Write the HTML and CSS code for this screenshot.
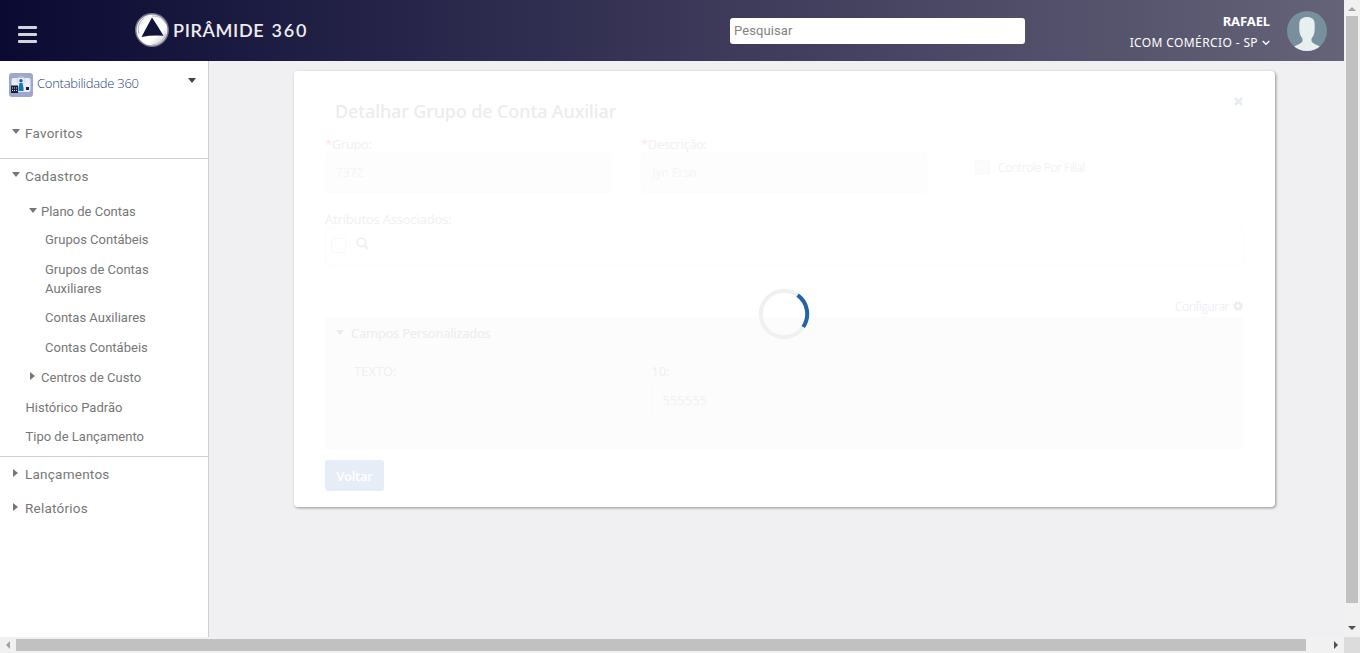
FILE: index.html
```html
<!DOCTYPE html>
<html lang="pt-BR">
<head>
<meta charset="utf-8">
<title>Pirâmide 360</title>
<link rel="stylesheet" href="styles.css">
</head>
<body>
<div class="window">
  <div class="app">
    <header class="topbar">
      <div class="burger"><i></i><i></i><i></i></div>
      <div class="brand">
        <svg width="36" height="36" viewBox="0 0 36 36">
          <defs><linearGradient id="ring" x1="0" y1="0" x2="1" y2="1"><stop offset="0" stop-color="#d6d6dc"/><stop offset=".3" stop-color="#fff"/><stop offset=".65" stop-color="#fff"/><stop offset="1" stop-color="#bcbcc6"/></linearGradient></defs>
          <circle cx="17" cy="18" r="17" fill="#77778b"/>
          <circle cx="17" cy="18" r="15.500" fill="url(#ring)"/>
          <path d="M17 4Q26 3 31 12M31 22Q27 32 17 33M4 22Q1 12 9 6" fill="none" stroke="#b5b5c2" stroke-width="1"/>
          <path d="M17 5.500Q22.800 14 28.500 23.800Q17 23 6.500 25Q12 14.500 17 5.500Z" fill="#141438"/>
        </svg>
        <span class="brand-name">PIRÂMIDE <span class="brand-num">360</span></span>
      </div>
      <input class="search" type="text" placeholder="Pesquisar">
      <div class="user">
        <div class="user-name">RAFAEL</div>
        <div class="company"><span class="company-name">ICOM COMÉRCIO - SP</span><svg width="8" height="6" viewBox="0 0 8 6"><path d="M.7 1 4 4.300 7.300 1" fill="none" stroke="#fff" stroke-width="1.300"/></svg></div>
      </div>
      <svg class="avatar" width="40" height="40" viewBox="0 0 40 40">
        <defs><clipPath id="face"><circle cx="20" cy="20" r="20"/></clipPath></defs>
        <circle cx="20" cy="20" r="20" fill="#78909c"/>
        <path clip-path="url(#face)" d="M20 6C15.500 6 12.300 8 12.300 13V18.500C12.300 23 14 25.500 15.500 27.500V30C15 32 11.500 33.500 7 35.500V40H33V35.500C28.500 33.500 25 32 24.500 30V27.500C26 25.500 27.700 23 27.700 18.500V13C27.700 8 24.500 6 20 6Z" fill="#e8efef"/>
      </svg>
    </header>
    <div class="body">
      <nav class="sidebar">
        <div class="module">
          <svg width="24" height="24" viewBox="0 0 24 24">
            <rect width="24" height="24" rx="3" fill="#9fa8cc"/>
            <rect x="2.500" y="5" width="19" height="14" rx="2" fill="#e9edf5"/>
            <circle cx="12" cy="7.500" r="3.800" fill="none" stroke="#cfd6e6"/>
            <circle cx="12" cy="7.800" r="1.700" fill="#12639f"/>
            <path d="M10.500 10h3l1 5v3h-5v-3z" fill="#1778b8"/>
            <rect x="2" y="12.500" width="7" height="7.500" fill="#14213c"/>
            <path d="M3 15h5M3 17.500h5" stroke="#e9edf5" stroke-dasharray="1 1"/>
            <rect x="17" y="14" width="3" height="3" fill="#14213c"/>
          </svg>
          <span class="module-name">Contabilidade 360</span><i class="down dark"></i>
        </div>
        <div class="group favorites"><i class="down"></i>Favoritos</div>
        <div class="section">
          <div class="group"><i class="down"></i>Cadastros</div>
          <div class="branch"><i class="down"></i>Plano de Contas</div>
          <ul class="leaves">
            <li>Grupos Contábeis</li>
            <li class="tight">Grupos de Contas Auxiliares</li>
            <li>Contas Auxiliares</li>
            <li class="tight">Contas Contábeis</li>
          </ul>
          <div class="branch closed"><i class="right"></i>Centros de Custo</div>
          <div class="entry">Histórico Padrão</div>
          <div class="entry short">Tipo de Lançamento</div>
        </div>
        <div class="group"><i class="right"></i>Lançamentos</div>
        <div class="group"><i class="right"></i>Relatórios</div>
      </nav>
      <main class="main">
        <section class="card">
          <div class="card-head">
            <h1>Detalhar Grupo de Conta Auxiliar</h1>
            <svg width="9" height="9" viewBox="0 0 9 9"><path d="M1 1l7 7M8 1l-7 7" stroke="#e6ebf4" stroke-width="2.600"/></svg>
          </div>
          <div class="fields">
            <div class="field"><label><b>*</b><span>Grupo:</span></label><div class="value">7372</div></div>
            <div class="field"><label><b>*</b><span>Descrição:</span></label><div class="value">Jyn Erso</div></div>
            <div class="check"><i class="box filled"></i><span>Controle Por Filial</span></div>
          </div>
          <div class="attributes">
            <label><span>Atributos Associados:</span></label>
            <div class="attr-box"><i class="box"></i><svg width="13" height="13" viewBox="0 0 13 13"><circle cx="5.300" cy="5.300" r="4.200" fill="none" stroke="#efefef" stroke-width="1.900"/><path d="M8.400 8.400 12 12" stroke="#efefef" stroke-width="2.200"/></svg></div>
          </div>
          <div class="configure"><span>Configurar</span>
            <svg width="10" height="10" viewBox="0 0 10 10"><circle cx="5" cy="5" r="2.800" fill="none" stroke="#ededed" stroke-width="2.300"/><circle cx="5" cy="5" r="4.300" fill="none" stroke="#ededed" stroke-width="1.400" stroke-dasharray="1.800 1.580"/></svg>
          </div>
          <div class="custom">
            <div class="custom-head"><i class="down faint"></i><span>Campos Personalizados</span></div>
            <div class="custom-fields">
              <div class="custom-field"><div class="custom-label">TEXTO:</div><div class="custom-value"></div></div>
              <div class="custom-field"><div class="custom-label">10:</div><div class="custom-value">555555</div></div>
            </div>
          </div>
          <button class="back">Voltar</button>
          <svg class="spinner" width="52" height="52" viewBox="0 0 52 52">
            <circle cx="26" cy="26" r="23.200" fill="none" stroke="#f0f0f0" stroke-width="4"/>
            <path d="M39.600 7.200A23.200 23.200 0 0 1 45.200 39" fill="none" stroke="#2264a4" stroke-width="4"/>
          </svg>
        </section>
      </main>
    </div>
  </div>
  <div class="vbar"><svg width="16" height="16"><path d="M4 11h8L8 7z" fill="#a3a3a3"/></svg><i class="vthumb"></i><svg width="16" height="16"><path d="M4 5h8L8 9z" fill="#505050"/></svg></div>
  <div class="hbar"><svg width="16" height="16"><path d="M10 4v8L6 8z" fill="#a3a3a3"/></svg><i class="hthumb"></i><svg width="16" height="16"><path d="M6 4v8l4-4z" fill="#505050"/></svg></div>
  <div class="corner"></div>
</div>
</body>
</html>
```
FILE: styles.css
```css
* { box-sizing: border-box; }
body { margin: 0; font-family: Roboto, sans-serif; font-size: 13px; color: #777; overflow: hidden; }
svg { display: block; flex: none; }
i { display: block; flex: none; }

.window { display: grid; grid-template: 637px 16px / 1344px 16px; width: 1360px; height: 653px; }
.app { display: flex; flex-direction: column; background: #f0f0f3; }

/* Top bar */
.topbar { height: 61px; flex: none; display: flex; background: linear-gradient(90deg, #0a0a33 0%, #3d3a5a 54%, #646378 100%); color: #fff; }
.burger { width: 19px; margin: 26px 0 0 18px; display: flex; flex-direction: column; gap: 4px; }
.burger i { height: 3px; background: #d3d3d8; border-radius: 1px; }
.brand { display: flex; align-items: center; width: 595px; margin-left: 98px; gap: 2px; height: 60px; }
.brand-name { font: 600 18px/24px Lato, sans-serif; color: #eeeef1; letter-spacing: .65px; white-space: nowrap; }
.brand-num { margin-left: 2px; letter-spacing: 1.900px; }
.search { width: 295px; height: 26px; margin-top: 18px; padding: 0 4px 2px; border: 0; border-radius: 3px; background: #fff; font: 13px Roboto, sans-serif; letter-spacing: .1px; }
.search::placeholder { color: #828282; opacity: 1; }
.user { width: 245px; text-align: right; padding-top: 11px; font-family: "Noto Sans", sans-serif; white-space: nowrap; }
.user-name { font-weight: 700; font-size: 13px; line-height: 20px; letter-spacing: -.1px; }
.company { display: flex; justify-content: flex-end; align-items: center; gap: 4px; font-size: 12px; line-height: 23px; letter-spacing: .38px; }
.avatar { margin: 11px 0 0 17px; }

/* Navigation */
.body { flex: 1; display: flex; min-height: 0; }
.sidebar { width: 209px; background: #fff; border-right: 1px solid #d0d0d3; }
.down { border: 4.500px solid transparent; border-top: 5px solid #777; border-bottom: 0; }
.right { border: 4.500px solid transparent; border-left: 5px solid #777; border-right: 0; }
.module { height: 47px; padding: 1px 12px 0 9px; display: flex; align-items: center; }
.module .down { margin: -9px 0 0 auto; }
.down.dark { border-top-color: #444; }
.module-name { margin: -4px 0 0 4px; font: 300 13px "Open Sans", sans-serif; color: #24427c; letter-spacing: -.27px; }
.group { height: 34px; display: flex; align-items: center; font-size: 13.500px; padding-left: 12px; letter-spacing: .24px; }
.group i { margin: -3px 5px 0 0; }
.group .right { margin-left: 1px; margin-right: 7px; }
.favorites { height: 50px; }
.section { border: solid #d0d0d3; border-width: 1px 0; height: 299px; }
.branch { height: 36px; padding-left: 29px; display: flex; align-items: center; }
.branch i { margin: -2px 4px 0 0; }
.branch .right { margin-left: 2px; margin-right: 6px; }
.branch.closed { height: 30px; padding-left: 28px; letter-spacing: .02px; }
.leaves { list-style: none; margin: -4px 0 0; padding: 0 40px 0 45px; line-height: 19px; }
.leaves li { padding: 5px 0 6px; }
.leaves .tight { padding-bottom: 5px; }
.entry { height: 30px; line-height: 31px; padding-left: 25.500px; }
.entry.short { height: 29px; line-height: 29px; }

/* Loading detail card */
.main { flex: 1; padding: 10px 0 0 85px; }
.card { position: relative; width: 981px; height: 436px; padding: 24px 31px 0; background: #fff; border-radius: 4px; box-shadow: 1px 1px 3px rgba(0,0,0,.4); font: 13px "Noto Sans", sans-serif; color: #f1f1f1; }
.card-head { height: 40px; display: flex; justify-content: space-between; padding: 0 1px 0 10px; }
.card-head svg { margin-top: 2px; }
h1 { margin: 2px 0 0; font: 500 18px/28px "Noto Sans", sans-serif; letter-spacing: -.13px; color: #ececec; white-space: nowrap; }
.fields { display: flex; gap: 30px; height: 74px; }
.field { width: 286px; }
label { display: flex; height: 18px; line-height: 19px; white-space: nowrap; letter-spacing: -.4px; }
label b { font-weight: 400; color: #fce9e4; }
.value { height: 40px; padding-left: 10px; border: 1px solid #fbfbfb; border-radius: 4px; background: #fdfdfd; line-height: 38px; font-size: 12px; color: #f5f5f5; }
.check { display: flex; align-items: center; height: 16px; margin: 24px 0 0 18px; gap: 8px; font-weight: 300; font-family: "Open Sans", sans-serif; font-size: 12px; letter-spacing: -.42px; color: #ededed; white-space: nowrap; }
.box { width: 15px; height: 15px; border: 1px solid #f9f9f9; border-radius: 2px; }
.box.filled { background: #fbfbfb; }
.attributes { height: 87px; }
.attributes label { height: 19px; line-height: 21px; letter-spacing: -.22px; }
.attr-box { display: flex; height: 38px; padding: 9px 0 0 5px; gap: 10px; border: 1px solid #fbfbfb; border-radius: 4px; }
.configure { display: flex; justify-content: flex-end; align-items: center; gap: 4px; height: 20px; padding-right: 1px; font: 300 12px "Open Sans", sans-serif; letter-spacing: -.3px; color: #e8e9f3; }
.attr-box svg { margin-top: -1px; }
.custom { height: 132px; margin-top: 1px; background: #fcfcfc; border-radius: 3px; }
.custom-head { display: flex; align-items: center; gap: 7px; height: 31px; padding-left: 11px; color: #ececec; letter-spacing: -.28px; }
.down.faint { border-top-color: #ececec; }
.custom-fields { display: flex; padding: 13px 0 0 29px; }
.custom-field { width: 297.500px; }
.custom-label { height: 20px; line-height: 20px; color: #f0f0f0; }
.custom-value { height: 36px; line-height: 38px; padding-left: 10px; border-left: 1px solid #fafafa; color: #f1f1f1; }
.back { width: 59px; height: 31px; margin-top: 11px; padding: 0; border: 0; border-radius: 3px; background: #e6edf6; color: #fff; font: 600 13px "Noto Sans", sans-serif; letter-spacing: -.3px; }
.spinner { position: absolute; left: 464px; top: 217px; }

/* Scrollbars */
.vbar { background: #f1f1f1; display: flex; flex-direction: column; align-items: center; justify-content: space-between; }
.vthumb { width: 12px; height: 587px; margin-bottom: auto; background: #c1c1c1; }
.hbar { background: #f1f1f1; display: flex; align-items: center; justify-content: space-between; }
.hthumb { width: 1290px; height: 12px; margin-right: auto; background: #c1c1c1; }
.corner { background: #dcdcdc; }
```
